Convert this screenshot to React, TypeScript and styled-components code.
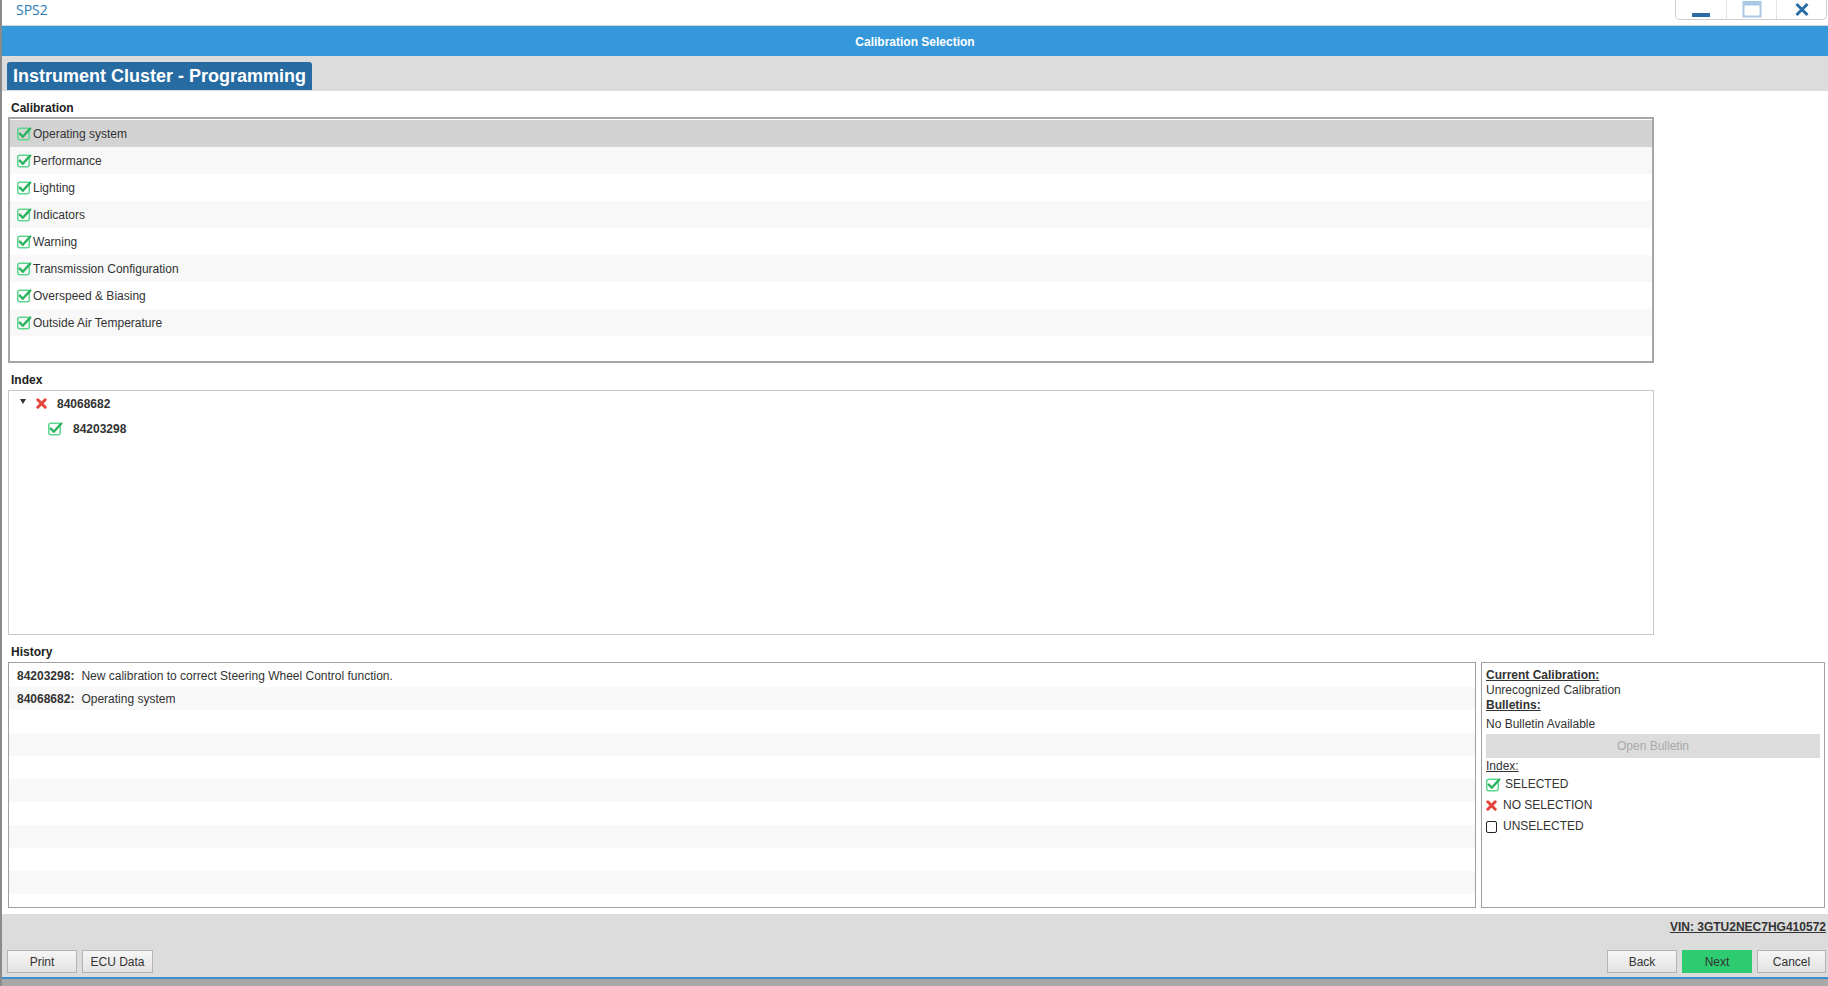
import React from 'react';
import styled, { createGlobalStyle } from 'styled-components';

const GlobalStyle = createGlobalStyle`
  html, body { margin: 0; padding: 0; }
  body {
    width: 1828px;
    height: 986px;
    overflow: hidden;
    background: #ffffff;
    font-family: "Liberation Sans", Arial, sans-serif;
    color: #333333;
  }
  * { box-sizing: border-box; }
`;

const Window = styled.div`
  width: 1828px;
  height: 986px;
  display: flex;
  flex-direction: column;
  border-left: 2px solid #8a8a8a;
  background: #ffffff;
`;

const TitleBar = styled.div`
  height: 26px;
  flex: none;
  display: flex;
  align-items: flex-start;
  justify-content: space-between;
  padding-left: 14px;
  padding-right: 1px;
  border-bottom: 1px solid #d6d6d6;
`;

const AppName = styled.div`
  font-family: "Open Sans", sans-serif;
  font-size: 14px;
  line-height: 20px;
  color: #2b78b6;
`;

const WinControls = styled.div`
  display: flex;
  height: 20px;
  border: 1px solid #cfcfcf;
  border-top: none;
  border-radius: 0 0 5px 5px;
  background: #ffffff;
`;

const WinButton = styled.div`
  width: 50px;
  height: 19px;
  display: flex;
  align-items: center;
  justify-content: center;
  & + & {
    border-left: 1px solid #e2e2e2;
  }
`;

const Header = styled.div`
  height: 30px;
  flex: none;
  background: #3498db;
  color: #ffffff;
  font-weight: bold;
  font-size: 12px;
  display: flex;
  align-items: center;
  justify-content: center;
  padding-top: 1px;
`;

const TabBand = styled.div`
  height: 35px;
  flex: none;
  background: #dcdcdc;
  display: flex;
  align-items: flex-end;
  padding-left: 5px;
  padding-bottom: 1px;
`;

const Tab = styled.div`
  height: 28px;
  padding: 0 6px 0 6px;
  background: #266ca3;
  color: #ffffff;
  font-weight: bold;
  font-size: 18px;
  display: flex;
  align-items: center;
  border-radius: 3px 3px 0 0;
`;

const Content = styled.div`
  flex: 1;
  display: flex;
  flex-direction: column;
  padding: 0 3px 6px 6px;
  background: #ffffff;
`;

const Section = styled.div`
  display: flex;
  flex-direction: column;
`;

const SectionLabel = styled.div`
  height: 26px;
  padding: 10px 0 0 3px;
  font-size: 12px;
  line-height: 14px;
  font-weight: bold;
  color: #222222;
`;

const CalBox = styled.div`
  width: 1646px;
  height: 246px;
  border: 2px solid #a6a6a6;
  padding-top: 1px;
  overflow: hidden;
`;

const CalRow = styled.div<{ $bg: string }>`
  height: 27px;
  display: flex;
  align-items: center;
  gap: 1px;
  padding-left: 7px;
  background: ${(p) => p.$bg};
  font-size: 12px;
  color: #333333;
`;

const IndexBox = styled.div`
  width: 1646px;
  height: 245px;
  margin-top: 1px;
  border: 1px solid #c8c8c8;
  overflow: hidden;
`;

const TreeRow = styled.div<{ $indent: number }>`
  height: 25px;
  display: flex;
  align-items: center;
  padding-left: ${(p) => p.$indent}px;
  font-size: 12px;
  font-weight: bold;
  color: #333333;
`;

const TreeToggle = styled.span`
  width: 0;
  height: 0;
  border-left: 3.5px solid transparent;
  border-right: 3.5px solid transparent;
  border-top: 5px solid #333333;
  margin-right: 10px;
  margin-top: -4px;
`;

const TreeIcon = styled.span`
  display: inline-flex;
  margin-right: 10px;
`;

const BottomRow = styled.div`
  display: flex;
  gap: 5px;
  margin-top: 1px;
`;

const HistoryBox = styled.div`
  width: 1468px;
  height: 246px;
  border: 1px solid #a0a0a0;
  padding-top: 1px;
  overflow: hidden;
`;

const HistRow = styled.div<{ $alt: boolean }>`
  height: 23px;
  display: flex;
  align-items: center;
  padding-left: 8px;
  font-size: 12px;
  color: #333333;
  background: ${(p) => (p.$alt ? '#f8f8f8' : '#ffffff')};
`;

const HistKey = styled.b`
  margin-right: 7px;
`;

const InfoBox = styled.div`
  flex: 1;
  height: 246px;
  border: 1px solid #a0a0a0;
  padding: 5px 4px;
  display: flex;
  flex-direction: column;
  font-size: 12px;
  line-height: 15px;
  color: #333333;
`;

const InfoHeading = styled.div<{ $bold?: boolean }>`
  text-decoration: underline;
  font-weight: ${(p) => (p.$bold ? 'bold' : 'normal')};
`;

const InfoText = styled.div<{ $mt?: number }>`
  margin-top: ${(p) => p.$mt ?? 0}px;
`;

const BulletinButton = styled.button`
  margin-top: 2px;
  margin-bottom: 1px;
  height: 24px;
  width: 100%;
  border: none;
  background: #dcdcdc;
  color: #a9a9a9;
  font-family: "Liberation Sans", Arial, sans-serif;
  font-size: 12px;
`;

const LegendRow = styled.div<{ $gap: number }>`
  height: 21px;
  display: flex;
  align-items: center;
  gap: ${(p) => p.$gap}px;
`;

const EmptyBox = styled.span`
  width: 11px;
  height: 12px;
  border: 1.5px solid #222222;
  border-radius: 2px;
`;

const Footer = styled.div`
  height: 63px;
  flex: none;
  background: #dcdcdc;
  display: flex;
  flex-direction: column;
  padding: 6px 2px 0 5px;
`;

const VinRow = styled.div`
  display: flex;
  justify-content: flex-end;
  font-size: 12px;
  line-height: 14px;
  font-weight: bold;
  color: #333333;
  text-decoration: underline;
  height: 30px;
`;

const ButtonRow = styled.div`
  display: flex;
  justify-content: space-between;
`;

const ButtonGroup = styled.div`
  display: flex;
  gap: 5px;
`;

const Button = styled.button<{ $w: number; $primary?: boolean }>`
  width: ${(p) => p.$w}px;
  height: 23px;
  border: 1px solid ${(p) => (p.$primary ? '#2ecc71' : '#b3b3b3')};
  background: ${(p) => (p.$primary ? '#2ecc71' : 'linear-gradient(#f5f5f5, #e3e3e3)')};
  font-family: "Liberation Sans", Arial, sans-serif;
  font-size: 12px;
  color: #333333;
  padding: 0;
`;

const BottomEdge = styled.div`
  height: 9px;
  flex: none;
  border-top: 2px solid #3a8fd0;
  background: #a8a8a8;
`;

const CheckIcon = () => (
  <svg width="15" height="14" viewBox="0 0 15 14">
    <rect x="0.75" y="1.25" width="11.5" height="11.5" rx="2" fill="none" stroke="#5dd68e" strokeWidth="1.5" />
    <path d="M2.8 6.6 L5.8 9.8 L13.2 1.6" fill="none" stroke="#2bb360" strokeWidth="2.4" strokeLinecap="round" strokeLinejoin="round" />
  </svg>
);

const XIcon = () => (
  <svg width="11" height="11" viewBox="0 0 11 11">
    <path d="M1.8 1.8 L9.2 9.2 M9.2 1.8 L1.8 9.2" stroke="#e6443a" strokeWidth="3" strokeLinecap="round" />
  </svg>
);

const calibrations = [
  'Operating system',
  'Performance',
  'Lighting',
  'Indicators',
  'Warning',
  'Transmission Configuration',
  'Overspeed & Biasing',
  'Outside Air Temperature',
];

const history: [string, string][] = [
  ['84203298:', 'New calibration to correct Steering Wheel Control function.'],
  ['84068682:', 'Operating system'],
];

export default function App() {
  const histRows = Array.from({ length: 11 }, (_, i) => history[i] ?? null);
  return (
    <>
      <GlobalStyle />
      <Window>
        <TitleBar>
          <AppName>SPS2</AppName>
          <WinControls>
            <WinButton>
              <svg width="20" height="19" viewBox="0 0 20 19">
                <rect x="1" y="13" width="18" height="4" fill="#2a6ca6" />
              </svg>
            </WinButton>
            <WinButton>
              <svg width="20" height="19" viewBox="0 0 20 19">
                <rect x="1.5" y="2" width="17" height="14.5" fill="none" stroke="#a8c8e3" strokeWidth="2" />
                <rect x="1" y="2" width="18" height="3.5" fill="#a8c8e3" />
              </svg>
            </WinButton>
            <WinButton>
              <svg width="16" height="19" viewBox="0 0 16 19">
                <path d="M2.5 4 L13.5 15 M13.5 4 L2.5 15" stroke="#2a6ca6" strokeWidth="3" />
              </svg>
            </WinButton>
          </WinControls>
        </TitleBar>
        <Header>Calibration Selection</Header>
        <TabBand>
          <Tab>Instrument Cluster - Programming</Tab>
        </TabBand>
        <Content>
          <Section>
            <SectionLabel>Calibration</SectionLabel>
            <CalBox>
              {calibrations.map((c, i) => (
                <CalRow key={c} $bg={i === 0 ? '#d3d3d3' : i % 2 === 1 ? '#f8f8f8' : '#ffffff'}>
                  <CheckIcon />
                  {c}
                </CalRow>
              ))}
            </CalBox>
          </Section>
          <Section>
            <SectionLabel>Index</SectionLabel>
            <IndexBox>
              <TreeRow $indent={11}>
                <TreeToggle />
                <TreeIcon>
                  <XIcon />
                </TreeIcon>
                84068682
              </TreeRow>
              <TreeRow $indent={39}>
                <TreeIcon>
                  <CheckIcon />
                </TreeIcon>
                84203298
              </TreeRow>
            </IndexBox>
          </Section>
          <Section>
            <SectionLabel>History</SectionLabel>
            <BottomRow>
              <HistoryBox>
                {histRows.map((h, i) => (
                  <HistRow key={i} $alt={i % 2 === 1}>
                    {h && (
                      <>
                        <HistKey>{h[0]}</HistKey>
                        {h[1]}
                      </>
                    )}
                  </HistRow>
                ))}
              </HistoryBox>
              <InfoBox>
                <InfoHeading $bold>Current Calibration:</InfoHeading>
                <InfoText>Unrecognized Calibration</InfoText>
                <InfoHeading $bold>Bulletins:</InfoHeading>
                <InfoText $mt={4}>No Bulletin Available</InfoText>
                <BulletinButton>Open Bulletin</BulletinButton>
                <InfoHeading>Index:</InfoHeading>
                <LegendRow $gap={4}>
                  <CheckIcon />
                  SELECTED
                </LegendRow>
                <LegendRow $gap={6}>
                  <XIcon />
                  NO SELECTION
                </LegendRow>
                <LegendRow $gap={6}>
                  <EmptyBox />
                  UNSELECTED
                </LegendRow>
              </InfoBox>
            </BottomRow>
          </Section>
        </Content>
        <Footer>
          <VinRow>VIN: 3GTU2NEC7HG410572</VinRow>
          <ButtonRow>
            <ButtonGroup>
              <Button $w={70}>Print</Button>
              <Button $w={71}>ECU Data</Button>
            </ButtonGroup>
            <ButtonGroup>
              <Button $w={70}>Back</Button>
              <Button $w={70} $primary>
                Next
              </Button>
              <Button $w={69}>Cancel</Button>
            </ButtonGroup>
          </ButtonRow>
        </Footer>
        <BottomEdge />
      </Window>
    </>
  );
}
